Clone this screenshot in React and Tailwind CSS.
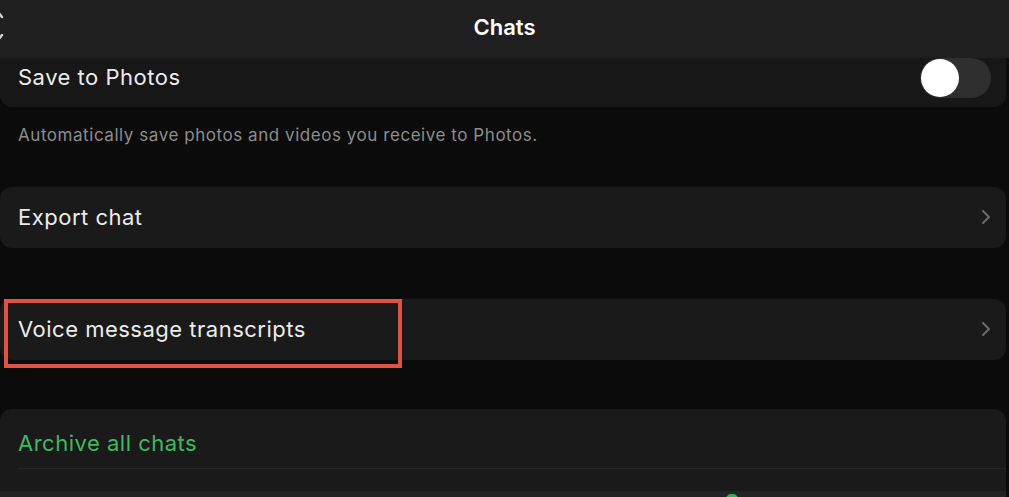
import React from 'react';

const font = { fontFamily: 'Inter, "Liberation Sans", sans-serif' };

function Chevron() {
  return (
    <svg width="12" height="18" viewBox="0 0 12 18" className="shrink-0">
      <path d="M3 3l6 6-6 6" fill="none" stroke="#6b6b6b" strokeWidth="2" strokeLinecap="round" strokeLinejoin="round" />
    </svg>
  );
}

function Row({ label, green, chevron }) {
  return (
    <div className="mr-[3px] flex h-[61px] items-center justify-between rounded-[12px] bg-[#1a1a1a] pl-[18px] pr-[14px]">
      <span className={`text-[22px] tracking-[0.5px] ${green ? 'text-[#3fb95f]' : 'text-[#ececec]'}`}>{label}</span>
      {chevron && <Chevron />}
    </div>
  );
}

export default function App() {
  return (
    <div className="flex h-[497px] w-[1009px] flex-col overflow-hidden bg-[#0b0b0b]" style={font}>
      <div className="relative flex h-[58px] shrink-0 items-center justify-center bg-[#1f1f1f]">
        <svg width="6" height="40" viewBox="0 0 6 40" className="absolute left-0 top-[8px]">
          <path d="M-2 4l4 5M2 27l-4 5" fill="none" stroke="#d0d0d0" strokeWidth="2.5" strokeLinecap="round" />
        </svg>
        <span className="mb-[4px] text-[22px] font-semibold text-white">Chats</span>
      </div>

      <div className="mr-[3px] flex h-[49px] shrink-0 items-center justify-between rounded-b-[12px] bg-[#171717] pl-[18px] pr-[15px]">
        <span className="mb-[10px] text-[22px] tracking-[0.5px] text-[#ececec]">Save to Photos</span>
        <div className="mb-[10px] flex h-[40px] w-[71px] items-center rounded-full bg-[#2f2f2f] pl-[1px]">
          <div className="h-[38px] w-[38px] rounded-full bg-white" />
        </div>
      </div>

      <p className="mt-[16px] pl-[18px] text-[17px] tracking-[0.55px] text-[#8d8d8d]">
        Automatically save photos and videos you receive to Photos.
      </p>

      <div className="mt-[38px]">
        <Row label="Export chat" chevron />
      </div>

      <div className="relative mt-[51px]">
        <Row label="Voice message transcripts" chevron />
        <div className="absolute left-[4px] top-0 h-[69px] w-[398px] border-[4px] border-[#df5347]" />
      </div>

      <div className="mr-[3px] mt-[49px] rounded-t-[12px] bg-[#1a1a1a]">
        <div className="h-[59px] pl-[18px] pt-[18px]">
          <span className="text-[22px] tracking-[0.5px] text-[#3fb95f]">Archive all chats</span>
        </div>
        <div className="ml-[18px] h-[1px] bg-[#262626]" />
        <div className="h-[22px]" />
        <div className="relative h-[10px] bg-[#232323]">
          <div className="absolute left-[726px] top-[3px] h-[10px] w-[12px] rounded-full bg-[#2bb552]" />
        </div>
      </div>
    </div>
  );
}
